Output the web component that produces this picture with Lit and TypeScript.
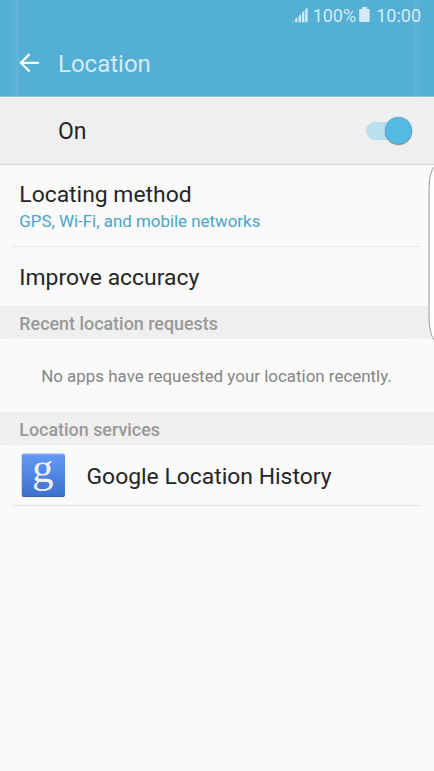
import { LitElement, html, css } from "lit";
import { customElement, property, state } from "lit/decorators.js";

@customElement("status-bar")
class StatusBar extends LitElement {
  static styles = css`
    :host { display: flex; height: 31px; justify-content: flex-end; padding-right: 13px; box-sizing: border-box; color: #d4eaf4; font-size: 18px; line-height: 31px; white-space: pre; }
    svg { display: block; flex: none; fill: currentColor; }
    .signal { margin: 7px 5px 0 0; }
    .battery { margin: 7px 6px 0 3px; }
  `;
  render() {
    return html`
      <svg class="signal" width="16" height="16" viewBox="0 0 16 16">
        <path d="M0 15.2l2-1.800v1.800zM3.200 15.2v-3.200l2.200-1.800v5zM6.700 15.2V9l2.300-2v8.200zM10 15.2V5.800l2.300-2v11.400zM13.200 15.2V2.500L15.600.4v14.800z" />
      </svg>
      <span class="level">100%</span>
      <svg class="battery" width="11" height="16" viewBox="0 0 11 16">
        <path d="M3 0h5v2h1.800q.8 0 .8.8V14q0 1-1 1H1.200q-1 0-1-1V2.800Q.2 2 1 2h2z" />
      </svg>
      <span>10:00</span>
    `;
  }
}

@customElement("toggle-switch")
class ToggleSwitch extends LitElement {
  static styles = css`
    :host { display: flex; width: 46px; height: 28px; align-items: center; }
    .track { display: flex; align-items: center; justify-content: flex-end; width: 46px; height: 18px; border-radius: 9px; background: #b9dfee; }
    .thumb { width: 27px; height: 27px; border-radius: 50%; background: #54bae1; box-shadow: 0 1px 1px rgba(40, 70, 85, .55), 0 0 1px rgba(40, 90, 110, .6); flex: none; }
  `;
  render() {
    return html`<div class="track"><div class="thumb"></div></div>`;
  }
}

@customElement("section-title")
class SectionTitle extends LitElement {
  @property() label = "";
  static styles = css`
    :host { display: block; height: 33px; padding-left: 19.300px; background: #efefef; color: #999; font-size: 17.900px; font-weight: 500; line-height: 35px; }
  `;
  render() {
    return html`${this.label}`;
  }
}

@customElement("app-root")
class AppRoot extends LitElement {
  @state() private services = ["Google Location History"];

  static styles = css`
    :host { display: block; position: relative; height: 771px; overflow: hidden; background: #fafafa; font-family: Roboto, "Noto Sans", sans-serif; color: #252525; }
    header { height: 97px; box-sizing: border-box; background: #54afd4; border-bottom: 1px solid #8fc3da; }
    .title-row { display: flex; height: 65px; align-items: center; }
    .back { margin: 0 0 1px 19px; width: 39px; height: 20px; flex: none; }
    .title { color: #d4eaf4; font-size: 24px; line-height: 65px; padding-top: 2px; }
    .master { display: flex; align-items: center; height: 68px; box-sizing: border-box; padding: 0 22px 0 58px; background: #efefef; border-bottom: 1px solid #d5d5d5; font-size: 23px; }
    .master span { flex: 1; padding-top: 2px; }
    .row { margin: 0 13px 0 12px; padding-left: 7.300px; box-sizing: border-box; font-size: 22.900px; }
    .method { height: 82px; border-bottom: 1px solid #e8e8e8; padding-top: 16px; }
    .name { line-height: 27px; }
    .detail { color: #4aa5c7; font-size: 16.900px; line-height: 24px; margin-top: 1px; }
    .improve { height: 59px; line-height: 62px; }
    .empty { height: 73px; line-height: 75px; text-align: center; color: #858585; font-size: 16.930px; padding-right: 1px; }
    .service { display: flex; align-items: center; height: 61px; border-bottom: 1px solid #e5e5e5; padding-left: 9px; }
    .service span { padding-top: 2px; }
    .logo { width: 44px; height: 44px; margin-right: 21.500px; flex: none; overflow: visible; }
    .mark { font-family: "Liberation Serif", serif; font-size: 43px; fill: #efefef; }
    .edge-handle { position: absolute; left: 428px; top: 164px; }
    .glow { position: absolute; top: 0; bottom: 0; width: 19px; pointer-events: none; }
    .left { left: 0; background: linear-gradient(90deg, transparent 55%, rgba(255,255,255,.08)); }
    .right { right: 0; background: linear-gradient(90deg, rgba(255,255,255,.08), transparent 45%); }
  `;

  render() {
    return html`
      <header>
        <status-bar></status-bar>
        <div class="title-row">
          <svg class="back" viewBox="0 0 39 20" fill="none" stroke="#fff" stroke-width="2.2">
            <path d="M10.600 1 1.900 9.800l8.700 8.800M2 9.800h18" />
          </svg>
          <span class="title">Location</span>
        </div>
      </header>
      <div class="master"><span>On</span><toggle-switch></toggle-switch></div>
      <div class="row method">
        <div class="name">Locating method</div>
        <div class="detail">GPS, Wi-Fi, and mobile networks</div>
      </div>
      <div class="row improve">Improve accuracy</div>
      <section-title label="Recent location requests"></section-title>
      <div class="empty">No apps have requested your location recently.</div>
      <section-title label="Location services"></section-title>
      ${this.services.map(
        (name) => html`
          <div class="row service">
            <svg class="logo" viewBox="0 0 44 44">
              <defs>
                <linearGradient id="blue" x1="0" y1="0" x2="0" y2="1">
                  <stop offset="0" stop-color="#639af6" />
                  <stop offset="1" stop-color="#3c70cf" />
                </linearGradient>
              </defs>
              <rect x=".7" y=".7" width="43.300" height="43.300" rx="2" fill="url(#blue)" />
              <path d="M2 1.200h41" stroke="#8bb3fa" />
              <path d="M2 43.500h41" stroke="#3560b4" />
              <text class="mark" x="11" y="28.500">g</text>
            </svg>
            <span>${name}</span>
          </div>
        `
      )}
      <div class="glow left"></div>
      <div class="glow right"></div>
      <svg class="edge-handle" width="6" height="180" viewBox="0 0 6 180">
        <path d="M7 2Q1 7 1 27V151Q1 171 7 177" fill="#fdfdfd" stroke="#999" />
      </svg>
    `;
  }
}
